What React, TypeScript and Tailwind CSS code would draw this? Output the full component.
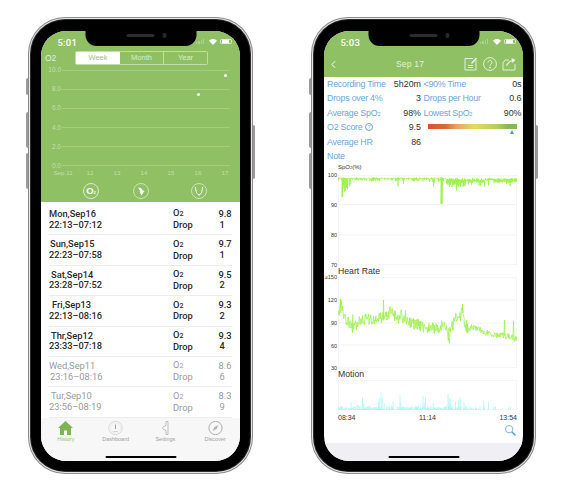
import React from "react";

const sans = "font-['Liberation_Sans',Arial,sans-serif]";

function rng(seed: number) {
  let a = seed;
  return () => {
    a |= 0;
    a = (a + 0x6d2b79f5) | 0;
    let t = Math.imul(a ^ (a >>> 15), 1 | a);
    t = (t + Math.imul(t ^ (t >>> 7), 61 | t)) ^ t;
    return ((t ^ (t >>> 14)) >>> 0) / 4294967296;
  };
}

function interp(pts: number[][], x: number) {
  for (let i = 1; i < pts.length; i++) {
    if (x <= pts[i][0]) {
      const [x0, y0] = pts[i - 1];
      const [x1, y1] = pts[i];
      return y0 + ((y1 - y0) * (x - x0)) / (x1 - x0);
    }
  }
  return pts[pts.length - 1][1];
}

function spo2Path() {
  const r = rng(7);
  let d = "M0 5";
  for (let x = 0; x < 179; x += 0.5) {
    const late = x > 108;
    const top = late ? 3 + r() * 3 : 2.5 + r() * 1.5;
    let y = top;
    if (late) {
      y = x > 147 && x < 156 ? 5 : 5 + r() * (x < 128 ? 7 : 3);
      if (r() < 0.12) y += r() * 6;
    } else {
      if (r() < 0.5) y += r() * 3;
      if (r() < 0.05) y += r() * 9;
    }
    if (x > 3 && x < 10) y = 4 + r() * 14;
    if (x > 3.5 && x < 5) y = 22;
    if (x > 8 && x < 9) y = 13;
    if (x > 102.5 && x < 104.5) y = 29;
    d += `L${x.toFixed(1)} ${top.toFixed(1)}L${x.toFixed(1)} ${y.toFixed(1)}`;
  }
  return d;
}

function hrPath() {
  const base = [
    [0, 38], [3, 28], [7, 40], [13, 50], [18, 48], [27, 43], [37, 42], [45, 40], [52, 36],
    [62, 41], [72, 46], [87, 49], [94, 52], [107, 48], [110, 58], [114, 50], [117, 42],
    [122, 38], [125, 36], [127, 49], [137, 51], [152, 57], [167, 59], [179, 61],
  ];
  const r = rng(21);
  let d = "M0 38";
  for (let x = 0; x < 179; x += 0.45) {
    const b = interp(base, x);
    const amp = x > 135 ? 6 : 13;
    let y = b + (r() - 0.5) * amp;
    if (r() < 0.06) y += (r() - 0.6) * 16;
    d += `L${x.toFixed(2)} ${y.toFixed(1)}`;
  }
  d += "M45 42L45.5 23L46 42M124 36L124.5 27L125 36M111 62L111.5 66L112 50M166 58L166.5 43L167 58M175 60L175.5 44L176 60M2 36L2.5 22L3 36";
  return d;
}

function motionPath() {
  const r = rng(5);
  let d = "";
  for (let x = 0.5; x < 179; x += 0.6) {
    const density = x < 115 ? 0.8 : x < 142 ? 0.45 : 0.12;
    if (r() > density) continue;
    const low = 1 + r() * 3;
    const h = r() < 0.18 ? low + r() * 11 : low;
    d += `M${x.toFixed(1)} 30V${(30 - h).toFixed(1)}`;
  }
  d += "M43 30V12M44 30V18M62 30V15M110 30V14M111 30V18M126 30V22M85 30V16";
  return d;
}

function Wifi({ className = "" }: { className?: string }) {
  return (
    <svg viewBox="0 0 12 9" className={className} fill="white">
      <path d="M6 9L0 2.6C3.6-.8 8.4-.8 12 2.6Z" />
    </svg>
  );
}

function StatusBar({ time, rightPad }: { time: string; rightPad: string }) {
  return (
    <div className={`flex h-[20.5px] items-start justify-between pl-[16.5px] pt-[6px] ${rightPad}`}>
      <span className="text-[9.5px] leading-[11px] font-medium tracking-[0.2px] text-white font-['Roboto',sans-serif]">{time}</span>
      <div className="mt-[2px] flex items-center gap-[2px]">
        <div className="flex items-end gap-[1px] opacity-30">
          <span className="h-[2px] w-[1.2px] bg-white" />
          <span className="h-[3px] w-[1.2px] bg-white" />
          <span className="h-[4px] w-[1.2px] bg-white" />
          <span className="h-[5px] w-[1.2px] bg-white" />
        </div>
        <Wifi className="ml-[3px] h-[6px] w-[8px]" />
        <div className="ml-[1px] flex h-[5.5px] w-[12px] items-center rounded-[1.5px] border-[0.5px] border-white/70 p-[0.5px]">
          <span className="h-full w-[7px] rounded-[0.5px] bg-white" />
        </div>
      </div>
    </div>
  );
}

function Phone({ children }: { children: React.ReactNode }) {
  return (
    <div className="relative h-[457px] w-[225px] shrink-0">
      <span className="absolute top-[61px] left-[-2px] h-[17px] w-[2px] rounded-l-sm bg-[#9a9a9a]" />
      <span className="absolute top-[95px] left-[-2px] h-[36px] w-[2px] rounded-l-sm bg-[#9a9a9a]" />
      <span className="absolute top-[136px] left-[-2px] h-[36px] w-[2px] rounded-l-sm bg-[#9a9a9a]" />
      <span className="absolute top-[108px] right-[-2px] h-[54px] w-[2px] rounded-r-sm bg-[#9a9a9a]" />
      <div className="h-full rounded-[37px] bg-[#8c8c8c] p-[1px]">
        <div className="h-full rounded-[36px] bg-[#e6e6e6] p-[1px]">
          <div className="h-full rounded-[35px] bg-[#2e2e2e] p-[1px]">
            <div className="h-full rounded-[34px] bg-black p-[10px] pt-[10.5px]">
              <div className={`relative flex h-full flex-col overflow-hidden rounded-[25px] bg-white ${sans}`}>
                {children}
                <div className="absolute top-0 left-1/2 h-[15.5px] w-[111px] -translate-x-1/2 rounded-b-[11px] bg-black">
                  <span className="absolute top-[3.5px] left-[41px] h-[2.5px] w-[28px] rounded-full bg-[#2c2c2c]" />
                  <span className="absolute top-[2.5px] left-[77px] h-[4.5px] w-[4.5px] rounded-full bg-[#1f2a33]" />
                </div>
                <span className="absolute bottom-[3.5px] left-1/2 h-[2px] w-[71px] -translate-x-1/2 rounded-full bg-black" />
              </div>
            </div>
          </div>
        </div>
      </div>
    </div>
  );
}

const yLabels = ["10.0", "8.0", "6.0", "4.0", "2.0", "0.0"];
const xLabels = ["Sep 11", "12", "13", "14", "15", "16", "17"];

type Row = {
  day: string;
  dayPad: string;
  time: string;
  timePad: string;
  o2: string;
  drop: string;
  faded?: boolean;
};

const rows: Row[] = [
  { day: "Mon,Sep16", dayPad: "pl-0", time: "22:13–07:12", timePad: "pl-0", o2: "9.8", drop: "1" },
  { day: "Sun,Sep15", dayPad: "pl-[1px]", time: "22:23–07:58", timePad: "pl-0", o2: "9.7", drop: "1" },
  { day: "Sat,Sep14", dayPad: "pl-[2px]", time: "23:28–07:52", timePad: "pl-0", o2: "9.5", drop: "2" },
  { day: "Fri,Sep13", dayPad: "pl-[3px]", time: "22:13–08:16", timePad: "pl-0", o2: "9.3", drop: "2" },
  { day: "Thr,Sep12", dayPad: "pl-[2px]", time: "23:33–07:18", timePad: "pl-0", o2: "9.3", drop: "4" },
  { day: "Wed,Sep11", dayPad: "pl-0", time: "23:16–08:16", timePad: "pl-[1px]", o2: "8.6", drop: "6", faded: true },
  { day: "Tur,Sep10", dayPad: "pl-[2px]", time: "23:56–08:19", timePad: "pl-0", o2: "8.3", drop: "9", faded: true },
];

function HistoryScreen() {
  return (
    <>
      <div className="flex h-[171.5px] shrink-0 flex-col bg-[#8fc064]">
        <StatusBar time="5:01" rightPad="pr-[8px]" />
        <div className="flex h-[14px] items-center pl-[4px]">
          <span className="w-[30px] text-[8.5px] text-[#e4f0da]">O2</span>
          <div className="flex h-[14px] w-[133px] rounded-[1.5px] border border-[#c3dcab] text-[7.5px] text-[#dcebcf]">
            <span className="flex w-[44px] items-center justify-center bg-white text-[#9cc778]">Week</span>
            <span className="flex w-[44px] items-center justify-center border-r border-[#c3dcab]">Month</span>
            <span className="flex flex-1 items-center justify-center">Year</span>
          </div>
        </div>
        <div className="relative mt-[1px] flex flex-col gap-[11.2px]">
          {yLabels.map((l) => (
            <div key={l} className="flex h-[8px] items-center">
              <span className="w-[20px] text-right text-[6.5px] leading-[8px] text-[#c5dfae]">{l}</span>
              <span className="ml-[1px] h-[1px] w-[168px] bg-[#a5ce83]" />
            </div>
          ))}
          <span className="absolute top-[7.5px] left-[183px] h-[3px] w-[3px] rounded-full bg-white" />
          <span className="absolute top-[26.5px] left-[156px] h-[3px] w-[3px] rounded-full bg-white" />
        </div>
        <div className="-mt-[0.5px] flex h-[7px] pl-[8.5px] text-[6.2px] leading-[7px] text-[#c5dfae]">
          {xLabels.map((l) => (
            <span key={l} className="w-[27px] shrink-0 text-center">
              {l}
            </span>
          ))}
        </div>
        <div className="relative mt-[6.5px] flex h-[16px]">
          <div className="ml-[42px] flex h-[16px] w-[16px] items-center justify-center rounded-full border border-[#dcebcf]">
            <span className="flex items-baseline text-[9.5px] leading-none font-bold text-white">
              O<span className="text-[4px]">2</span>
            </span>
          </div>
          <svg viewBox="0 0 16 16" className="ml-[34px] h-[16px] w-[16px]">
            <circle cx="8" cy="8" r="7.5" fill="none" stroke="#dcebcf" strokeWidth="0.8" />
            <path d="M5 4.5L8 5L10 7.5L11.5 8L8.5 12.5L6.5 8.5L7.5 8.2Z" fill="white" />
          </svg>
          <svg viewBox="0 0 16 16" className="ml-[42px] h-[16px] w-[16px]">
            <circle cx="8" cy="8" r="7.5" fill="none" stroke="#dcebcf" strokeWidth="0.8" />
            <path d="M4.5 4C4.8 8 5.5 11.5 8 11.5S11.2 8 11.5 4" fill="none" stroke="white" strokeWidth="1" />
            <path d="M6.5 11.2L8 13L9.5 11.2Z" fill="white" />
          </svg>
        </div>
      </div>
      <div className="flex-1 pt-[3px]">
        {rows.map((r) => (
          <div
            key={r.day}
            className={`mx-[8px] flex h-[30.4px] items-center border-b border-[#ececec] text-[9.3px] leading-[10.7px] font-['Roboto',sans-serif] ${
              r.faded ? "text-[#9a9a9a]" : "font-medium text-[#2a2a2a]"
            }`}
          >
            <div className="w-[124px]">
              <div className={r.dayPad}>{r.day}</div>
              <div className={r.timePad}>{r.time}</div>
            </div>
            <div className="w-[45.5px]">
              <div>
                O<span className="text-[7px]">2</span>
              </div>
              <div>Drop</div>
            </div>
            <div>
              <div>{r.o2}</div>
              <div className="pl-[1px]">{r.drop}</div>
            </div>
          </div>
        ))}
      </div>
      <div className="grid h-[43.2px] shrink-0 grid-cols-4 bg-[#f7f7f7] pt-[3px] text-center text-[5.5px] leading-[7px] text-[#a0a0a0]">
        <div className="flex flex-col items-center text-[#93c46a]">
          <svg viewBox="0 0 15 14" className="h-[14px] w-[15px]" fill="#7fb356">
            <path d="M7.5 0L15 7H13V14H9V9.5H6V14H2V7H0Z" />
          </svg>
          <span className="mt-[1.5px]">History</span>
        </div>
        <div className="flex flex-col items-center">
          <svg viewBox="0 0 15 14" className="h-[14px] w-[15px]" fill="none" stroke="#c4c4c4" strokeWidth="0.6">
            <circle cx="7.5" cy="7" r="6.7" />
            <circle cx="7.5" cy="7" r="5" strokeDasharray="0.6 1.2" />
            <path d="M7.5 3.5V8" stroke="#8a8a8a" strokeWidth="0.8" />
            <path d="M5.5 10.5H9.5" stroke="#b0b0b0" />
          </svg>
          <span className="mt-[1.5px]">Dashboard</span>
        </div>
        <div className="flex flex-col items-center">
          <svg viewBox="0 0 15 14" className="h-[14px] w-[15px]" fill="none" stroke="#a8a8a8" strokeWidth="0.7">
            <path d="M8 0.5H10V13.5H8V9.5L5.5 8.5C4.5 8 4.5 6 5.5 5.5L8 4.5Z" />
          </svg>
          <span className="mt-[1.5px]">Settings</span>
        </div>
        <div className="flex flex-col items-center">
          <svg viewBox="0 0 15 14" className="h-[14px] w-[15px]" fill="none" stroke="#9a9a9a" strokeWidth="0.8">
            <circle cx="7.5" cy="7" r="6.6" />
            <path d="M10.5 4L8.5 8L4.5 10L6.5 6Z" fill="#b0b0b0" stroke="none" />
          </svg>
          <span className="mt-[1.5px]">Discover</span>
        </div>
      </div>
    </>
  );
}

function StatCol({ label, value, width }: { label: React.ReactNode; value?: string; width: string }) {
  return (
    <div className={`flex justify-between ${width}`}>
      <span className="tracking-[-0.25px] text-[#6ea6d9]">{label}</span>
      {value && <span className="text-[#333]">{value}</span>}
    </div>
  );
}

function Axis({ labels, height }: { labels: string[]; height: string }) {
  return (
    <div className={`-my-[3px] flex w-[14px] shrink-0 flex-col justify-between pr-[1px] text-right text-[5.5px] leading-[6px] text-[#333] ${height}`}>
      {labels.map((l) => (
        <span key={l}>{l}</span>
      ))}
    </div>
  );
}

function Grid({ w, h, lines }: { w: number; h: number; lines: number[] }) {
  return (
    <>
      <rect x="0.25" y="0.25" width={w - 0.5} height={h - 0.5} fill="none" stroke="#eeeeee" strokeWidth="0.6" />
      {lines.map((y) => (
        <path key={y} d={`M0 ${y}H${w}`} stroke="#eeeeee" strokeWidth="0.7" />
      ))}
    </>
  );
}

function DetailScreen() {
  return (
    <>
      <div className="h-[46.5px] shrink-0 bg-[#8fc064]">
        <StatusBar time="5:03" rightPad="pr-[7px]" />
        <div className="flex h-[26px] items-center pl-[7px]">
          <svg viewBox="0 0 6 10" className="h-[9px] w-[5px]" fill="none" stroke="white" strokeWidth="1.1">
            <path d="M5 1L1 5L5 9" />
          </svg>
          <span className="ml-[60px] text-[8.5px] tracking-[0.2px] text-[#e4f0da]">Sep 17</span>
          <svg viewBox="0 0 14 14" className="ml-[40px] h-[14px] w-[14px]" fill="none" stroke="#eef6e8" strokeWidth="0.9">
            <path d="M12 3V13H1V1.5H9" />
            <path d="M4 8.5H9M4 10.5H9" />
            <path d="M7.5 6.5L12.5 1" strokeWidth="1.4" />
          </svg>
          <svg viewBox="0 0 14 14" className="ml-[4.5px] h-[14px] w-[14px]" fill="none" stroke="#eef6e8" strokeWidth="0.9">
            <circle cx="7" cy="7" r="6.4" />
            <path d="M5 5.5C5 2.8 9 2.8 9 5.5C9 7 7 7 7 8.8" />
            <circle cx="7" cy="10.6" r="0.5" fill="#eef6e8" />
          </svg>
          <svg viewBox="0 0 14 14" className="ml-[5px] h-[14px] w-[14px]" fill="none" stroke="#eef6e8" strokeWidth="0.9">
            <path d="M13 7V13H1V6L3 3H7" />
            <path d="M4.5 9C5.5 5.5 8 4 11.5 3.5" strokeWidth="1.1" />
            <path d="M9.5 1L13.5 3L10.5 6Z" fill="#eef6e8" stroke="none" />
          </svg>
        </div>
      </div>
      <div className="text-[8.9px] leading-[14.4px]">
        <div className="flex h-[14.4px] gap-[2.5px] pl-[3px]">
          <StatCol label="Recording Time" value="5h20m" width="w-[94px]" />
          <StatCol label="<90% Time" value="0s" width="w-[98px]" />
        </div>
        <div className="flex h-[14.4px] gap-[2.5px] pl-[3px]">
          <StatCol label="Drops over 4%" value="3" width="w-[94px]" />
          <StatCol label="Drops per Hour" value="0.6" width="w-[98px]" />
        </div>
        <div className="flex h-[14.4px] gap-[2.5px] pl-[3px]">
          <StatCol label={<>Average SpO<span className="text-[5.5px]">2</span></>} value="98%" width="w-[94px]" />
          <StatCol label={<>Lowest SpO<span className="text-[5.5px]">2</span></>} value="90%" width="w-[98px]" />
        </div>
        <div className="flex h-[14.4px] pl-[3px]">
          <div className="flex w-[94px] justify-between pr-0">
            <span className="flex items-center tracking-[-0.25px] text-[#6ea6d9]">
              O2 Score
              <span className="ml-[2.5px] flex h-[8px] w-[8px] items-center justify-center rounded-full border-[0.7px] border-[#6ea6d9] text-[5.5px] leading-none">?</span>
            </span>
            <span className="text-[#333]">9.5</span>
          </div>
          <div className="relative mt-[4px] ml-[7px] h-[5px] w-[89px] bg-[linear-gradient(90deg,#d9532c_0%,#dc6a3a_20%,#e8a468_33%,#e3dc5c_52%,#bcd05c_75%,#86b85a_90%,#86b85a_100%)]">
            <span className="absolute top-[6px] left-[82px] h-0 w-0 border-x-[2.5px] border-b-[4px] border-x-transparent border-b-[#5c93c9]" />
          </div>
        </div>
        <div className="flex h-[14.4px] pl-[3px]">
          <StatCol label="Average HR" value="86" width="w-[94px]" />
        </div>
        <div className="h-[14.4px] pl-[3px] tracking-[-0.25px] text-[#6ea6d9]">Note</div>
      </div>
      <div className="pl-[14px] text-[6px] leading-[8px] text-[#333]">
        SpO<span className="text-[4px]">2</span>(%)
      </div>
      <div className="mt-[3px] flex">
        <Axis labels={["100", "90", "80", "70"]} height="h-[96px]" />
        <svg viewBox="0 0 179 90" className="h-[90px] w-[179px]">
          <Grid w={179} h={90} lines={[29.5, 60]} />
          <path d={spo2Path()} fill="none" stroke="#9cf24e" strokeWidth="0.75" />
        </svg>
      </div>
      <div className="h-[12px] pl-[14px] text-[8.7px] leading-[12px] text-[#333]">Heart Rate</div>
      <div className="flex">
        <Axis labels={["≥150", "120", "90", "60", "30"]} height="h-[97px]" />
        <svg viewBox="0 0 179 91" className="h-[91px] w-[179px]">
          <Grid w={179} h={91} lines={[23, 46, 68]} />
          <path d={hrPath()} fill="none" stroke="#98f048" strokeWidth="0.75" />
        </svg>
      </div>
      <div className="h-[12px] pl-[14px] text-[8.7px] leading-[12px] text-[#333]">Motion</div>
      <div className="pl-[14px]">
        <svg viewBox="0 0 179 30" className="h-[30px] w-[179px]">
          <Grid w={179} h={30} lines={[]} />
          <path d={motionPath()} fill="none" stroke="#a4f6f6" strokeWidth="0.75" />
        </svg>
      </div>
      <div className="mt-[4px] flex h-[8px] w-[193px] justify-between pl-[14px] text-[7px] leading-[8px] text-[#333]">
        <span>08:34</span>
        <span>11:14</span>
        <span>13:54</span>
      </div>
      <div className="mt-[3px] flex h-[11px] justify-end pr-[7px]">
        <svg viewBox="0 0 11 11" className="h-[11px] w-[11px]" fill="none" stroke="#5f9fd8" strokeWidth="0.8">
          <circle cx="4.2" cy="4.2" r="3.7" />
          <path d="M7 7L10.5 10.5" strokeWidth="1.5" />
        </svg>
      </div>
      <div className="mt-[7px] flex-1 bg-[#efeff4]" />
    </>
  );
}

export default function App() {
  return (
    <div className={`flex h-[498px] w-[564px] gap-[58px] overflow-hidden bg-white pt-[17px] pl-[28px] ${sans}`}>
      <Phone>
        <HistoryScreen />
      </Phone>
      <Phone>
        <DetailScreen />
      </Phone>
    </div>
  );
}
